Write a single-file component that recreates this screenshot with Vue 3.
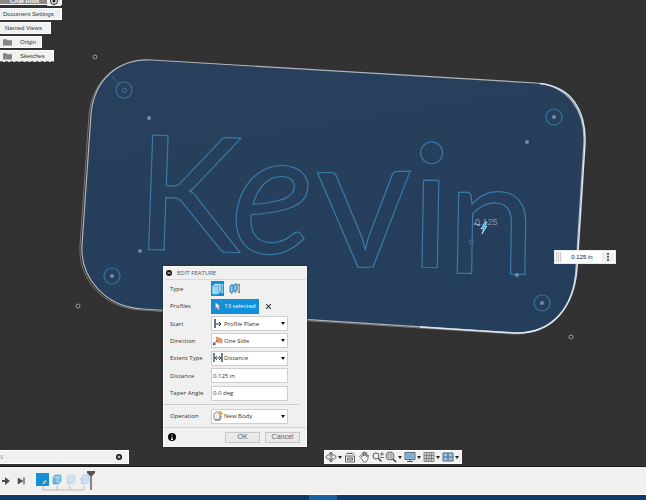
<template>
  <div class="app">
    <main class="viewport">
      <svg class="canvas" viewBox="0 0 646 466" preserveAspectRatio="xMinYMin slice" role="img" aria-label="Name plate sketch">
        <defs>
          <linearGradient id="plate" x1="0" y1="0" x2="0.3" y2="1">
            <stop offset="0" stop-color="#28405c" />
            <stop offset="1" stop-color="#253e5b" />
          </linearGradient>
        </defs>

        <path class="plate-side" :d="plate" transform="translate(-2 1)" />
        <path class="plate" :d="plate" />
        <path class="plate-edge" d="M540 83.500C572 87 586 111 585 143L577 268C574 308 552 334 515 333L420 327" />

        <text class="engraving"><tspan class="cap" x="134" y="249" rotate="2">K</tspan><tspan class="slant" x="230" y="252" rotate="2">e</tspan><tspan class="wide" x="317" y="268" rotate="-1">v</tspan><tspan x="409" y="267" rotate="1">i</tspan><tspan class="cap" x="446" y="273" rotate="1">n</tspan></text>

        <g class="hole">
          <circle v-for="h in holes" :key="h.x" :cx="h.x" :cy="h.y" r="8" />
        </g>
        <g class="point">
          <circle v-for="p in points" :key="p.x" :cx="p.x" :cy="p.y" r="2" />
        </g>
        <g class="corner">
          <circle v-for="c in corners" :key="c.x" :cx="c.x" :cy="c.y" r="2" />
        </g>
        <circle class="ring" cx="124.500" cy="90.500" r="2.200" />
        <circle class="ring" cx="471" cy="242" r="2" />
        <path class="guide" d="M112 76l8 9M438 223h1M454 223h1M465 224h1M492 226h1M506 227h1" />

        <text class="dim" x="475" y="225">0.125</text>
        <path d="M474 224h2M477 225h3" stroke="#f2dfe4" />
        <path d="M485 222l-4 7 3-1-2 6 5-8-3 1 3-5z" fill="#1fa4e8" stroke="#d7f1ff" stroke-width=".7" />
      </svg>

      <nav class="tree" aria-label="Browser">
        <button type="button" class="node root">
          <span>CAM Root</span>
          <svg viewBox="0 0 10 10"><circle cx="5" cy="5" r="3.500" fill="none" stroke="#222" /><circle cx="5" cy="5" r="1.500" fill="#222" /></svg>
        </button>
        <button type="button" class="node settings">Document Settings</button>
        <button type="button" class="node views">Named Views</button>
        <button type="button" class="node folder origin">
          <svg viewBox="0 0 10 8"><path d="M0 1h4l1 1h5v6H0z" fill="#858585" /></svg>Origin
        </button>
        <button type="button" class="node folder sketches">
          <svg viewBox="0 0 10 8"><path d="M0 1h4l1 1h5v6H0z" fill="#858585" /></svg>Sketches
        </button>
      </nav>

      <form class="dialog" @submit.prevent>
        <header class="dialog-head">
          <svg viewBox="0 0 6 6"><circle cx="3" cy="3" r="3" fill="#151515" /><path d="M1.500 3h3" stroke="#fff" /></svg>
          <span>EDIT FEATURE</span>
        </header>

        <div class="fields">
          <div class="row">
            <span class="label">Type</span>
            <div class="types">
              <button type="button" class="type" :class="{ active: type === 'extrude' }" aria-label="Extrude" @click="type = 'extrude'">
                <svg viewBox="0 0 14 14">
                  <path d="M2 4l2-2h6v7l-2 3H2z" fill="#9bd5f4" stroke="#e8f7ff" stroke-width=".7" />
                  <path d="M2 4h6v8M8 4l2-2" fill="none" stroke="#4d9cce" stroke-width=".7" />
                  <path d="M12 2v9M11 3l1-1 1 1M11 10l1 1 1-1" fill="none" stroke="#fff" stroke-width=".8" />
                </svg>
              </button>
              <button type="button" class="type" :class="{ active: type === 'thin' }" aria-label="Thin extrude" @click="type = 'thin'">
                <svg viewBox="0 0 14 14">
                  <path d="M2 4l2-2 2 1 2-2 2 1v6l-2 3-2-2-2 3-2-2z" fill="#579fce" stroke="#28709c" stroke-width=".6" />
                  <path d="M4 4v6M8 3v5" stroke="#b6dff4" />
                  <path d="M12 2v9M11 3l1-1 1 1M11 10l1 1 1-1" fill="none" stroke="#333" stroke-width=".8" />
                </svg>
              </button>
            </div>
          </div>

          <div class="row">
            <span class="label">Profiles</span>
            <button type="button" class="selection">
              <svg viewBox="0 0 8 10"><path d="M1 0v8l2-2 1 3 2-1-1-3h2z" fill="#f5e9e4" stroke="#6d6263" stroke-width=".6" /></svg>
              13 selected
            </button>
            <button type="button" class="clear" aria-label="Clear selection">
              <svg viewBox="0 0 6 6"><path d="M1 1l4 4M5 1L1 5" stroke="#333" stroke-width=".9" /></svg>
            </button>
          </div>

          <div v-for="s in selects" :key="s.id" class="row">
            <label class="label" :for="s.id">{{ s.label }}</label>
            <div class="box">
              <svg v-if="s.id === 'start'" viewBox="0 0 10 10"><path d="M2 0v9" stroke="#142846" stroke-width="1.300" /><path d="M3 5h5M6 3l2 2-2 2" fill="none" stroke="#27364c" /></svg>
              <svg v-else-if="s.id === 'direction'" viewBox="0 0 10 10"><path d="M3 1l6 2v4L4 6z" fill="#ef9a61" stroke="#bd7142" stroke-width=".5" /><path d="M0 9l5-5M0 9l1-3M0 9l3-1" stroke="#444" stroke-width=".8" /></svg>
              <svg v-else viewBox="0 0 10 10"><path d="M1 0v9M9 0v9" stroke="#142846" stroke-width="1.200" /><path d="M2 5h6M4 3L2 5l2 2M6 3l2 2-2 2" fill="none" stroke="#27364c" stroke-width=".8" /></svg>
              <select :id="s.id" v-model="s.value"><option>{{ s.value }}</option></select>
              <svg class="arrow" viewBox="0 0 4 3"><path d="M0 0h4L2 3z" fill="#111" /></svg>
            </div>
          </div>

          <div class="row">
            <label class="label" for="distance">Distance</label>
            <input id="distance" v-model="distance" class="box text" />
          </div>
          <div class="row">
            <label class="label" for="taper">Taper Angle</label>
            <input id="taper" v-model="taper" class="box text" />
          </div>
        </div>

        <div class="row operation">
          <label class="label" for="operation">Operation</label>
          <div class="box">
            <svg viewBox="0 0 10 10"><path d="M1 3l2-2h4v7l-2 1H2L1 8z" fill="#eee" stroke="#77777c" stroke-width=".8" /><path d="M2 9h5l1-2V5" fill="none" stroke="#777" /><path d="M7.500 0v5M5 2.500h5M6 1l3 3M9 1L6 4" stroke="#f5a91c" /></svg>
            <select id="operation" v-model="operation"><option>New Body</option></select>
            <svg class="arrow" viewBox="0 0 4 3"><path d="M0 0h4L2 3z" fill="#111" /></svg>
          </div>
        </div>

        <footer class="dialog-foot">
          <button type="button" class="info" aria-label="Info">
            <svg viewBox="0 0 8 8"><circle cx="4" cy="4" r="4" fill="#080808" /><path d="M4 1.500v1M4 3.500v3M3 6.500h2" stroke="#fff" /></svg>
          </button>
          <button type="submit" class="action">OK</button>
          <button type="button" class="action cancel">Cancel</button>
        </footer>
      </form>

      <div class="value">
        <span class="grip"></span>
        <input v-model="distance" aria-label="Extrude distance" />
        <button type="button" aria-label="More">
          <svg viewBox="0 0 10 9"><path d="M4 0h2v2H4zM4 3h2v2H4zM4 6h2v2H4z" fill="#666" /></svg>
        </button>
      </div>

      <div class="comments">
        <span>S</span>
        <button type="button" aria-label="Add comment">
          <svg viewBox="0 0 6 6"><circle cx="3" cy="3" r="3" fill="#111" /><path d="M3 1.500v3M1.500 3h3" stroke="#fff" stroke-width=".9" /></svg>
        </button>
      </div>

      <div class="navbar" role="toolbar" aria-label="Navigation">
        <button type="button" class="drop" aria-label="Orbit">
          <svg viewBox="0 0 12 12"><path d="M6 1v10M4 3l2-2 2 2M4 9l2 2 2-2" fill="none" stroke="#444" stroke-width=".8" /><ellipse cx="6" cy="6" rx="5" ry="2.200" fill="none" stroke="#555" stroke-width=".9" /><circle cx="6" cy="6" r="1.700" fill="#83bce2" /></svg>
          <svg class="arrow" viewBox="0 0 4 3"><path d="M0 0h4L2 3z" fill="#222" /></svg>
        </button>
        <button type="button" aria-label="Look at">
          <svg viewBox="0 0 12 12"><path d="M1.500 5h9v6h-9zM3.500 7h5v2h-5z" fill="#eee" stroke="#555" stroke-width=".9" /><path d="M2 3.500l2-2M10 3.500l-2-2M4 2.500h4" fill="none" stroke="#555" /></svg>
        </button>
        <button type="button" aria-label="Pan">
          <svg viewBox="0 0 12 12"><path d="M4 8L1.500 5.500l1-1L4 6V2.500l1-.5.500 3V1h1.200l.3 4 .7-3.500 1 .3V6l.8-2 1 .5-1 4.500-1.500 2H5.500z" fill="#f8f8f8" stroke="#4b4b4b" stroke-width=".7" /></svg>
        </button>
        <button type="button" aria-label="Zoom">
          <svg viewBox="0 0 12 12"><circle cx="4" cy="5" r="3" fill="#edf1f4" stroke="#555" /><path d="M6.500 7.500l3 3" stroke="#444" stroke-width="1.500" /><path d="M10 1v4M8 3h4M8 6.500h4" stroke="#444" stroke-width=".7" /></svg>
        </button>
        <button type="button" class="drop" aria-label="Fit">
          <svg viewBox="0 0 12 12"><circle cx="5" cy="5" r="4" fill="#edf1f4" stroke="#666" /><path d="M3 3h4v4H3z" fill="#bcc8d2" stroke="#777" stroke-width=".6" /><path d="M8 8l3 3" stroke="#444" stroke-width="1.700" /></svg>
          <svg class="arrow" viewBox="0 0 4 3"><path d="M0 0h4L2 3z" fill="#222" /></svg>
        </button>
        <button type="button" class="drop" aria-label="Display settings">
          <svg viewBox="0 0 12 12"><path d="M1 1.500h10v7H1z" fill="#8cb9de" stroke="#666" /><path d="M3 3h6v4H3z" fill="#76acd8" /><path d="M3 10.500h6M6 9v2" stroke="#555" /></svg>
          <svg class="arrow" viewBox="0 0 4 3"><path d="M0 0h4L2 3z" fill="#222" /></svg>
        </button>
        <button type="button" class="drop" aria-label="Grid and snaps">
          <svg viewBox="0 0 12 12"><path d="M1 1.500h10v9H1zM1 4.500h10M1 7.500h10M3.500 1.500v9M6 1.500v9M8.500 1.500v9" fill="#ccc" stroke="#777" stroke-width=".8" /></svg>
          <svg class="arrow" viewBox="0 0 4 3"><path d="M0 0h4L2 3z" fill="#222" /></svg>
        </button>
        <button type="button" class="drop" aria-label="Viewports">
          <svg viewBox="0 0 12 12"><path d="M1 2h10v8H1zM1 6h10M6 2v8" fill="#9ac4e5" stroke="#4d6786" /></svg>
          <svg class="arrow" viewBox="0 0 4 3"><path d="M0 0h4L2 3z" fill="#222" /></svg>
        </button>
      </div>
    </main>

    <section class="timeline" aria-label="Timeline">
      <button type="button" aria-label="Play"><svg viewBox="0 0 10 10"><path d="M1 4h3V1l5 4-5 4V6H1z" fill="#505050" /></svg></button>
      <button type="button" aria-label="Go to end"><svg viewBox="0 0 10 10"><path d="M2 2l5 3-5 3z" fill="#505050" stroke="#505050" stroke-width=".6" /><path d="M8 1.500v7" stroke="#505050" stroke-width="1.200" /></svg></button>
      <div class="track">
        <svg class="history" viewBox="0 0 56 20">
          <path d="M8 14v4h41v-4M22 14v4M35 14v4" fill="none" stroke="#b9b9b9" />
          <path d="M1 1h13v13H1z" fill="#1390d8" />
          <path d="M4 11h4" stroke="#2376a2" />
          <path d="M7 12l3-4 2 1-3 3z" fill="#f4b76c" />
          <g v-for="(f, i) in features" :key="i" :transform="`translate(${f.x} 0)`" :opacity="f.opacity">
            <path d="M0 5l2-2h6v6l-2 3H0z" fill="#65b5df" stroke="#499bca" stroke-width=".6" />
            <path d="M0 5h6v7M6 5l2-2M4 4v7" fill="none" stroke="#d1edf9" stroke-width=".7" />
          </g>
        </svg>
        <svg class="marker" viewBox="0 0 8 20"><path d="M0 0h8v2L5 5H3L0 2z" fill="#555" /><path d="M4 4v15" stroke="#555" stroke-width="1.400" /></svg>
      </div>
    </section>
    <div class="taskbar"><span></span></div>
  </div>
</template>

<script setup>
import { ref } from 'vue'

const type = ref('extrude')
const distance = ref('0.125 in')
const taper = ref('0.0 deg')
const operation = ref('New Body')

const selects = ref([
  { id: 'start', label: 'Start', value: 'Profile Plane' },
  { id: 'direction', label: 'Direction', value: 'One Side' },
  { id: 'extent', label: 'Extent Type', value: 'Distance' }
])

const plate = 'M91 114C94 80 118 58 152 60L536 83C568 86 585 110 584 142L576 268C574 308 552 334 515 333L143 309C105 307 80 278 82 245Z'

const holes = [{ x: 124, y: 90 }, { x: 554, y: 117 }, { x: 542, y: 303 }, { x: 112, y: 276 }]
const points = [
  { x: 149, y: 118 }, { x: 140, y: 251 }, { x: 527, y: 142 }, { x: 517, y: 275 },
  { x: 554, y: 117 }, { x: 542, y: 303 }, { x: 112, y: 276 }
]
const corners = [{ x: 95, y: 57 }, { x: 78, y: 306 }, { x: 571, y: 337 }]

const features = [
  { x: 18, opacity: 1 },
  { x: 32, opacity: 0.3 },
  { x: 46, opacity: 0.35 }
]
</script>

<style>
body { margin: 0; background: #323232; }
</style>

<style scoped>
.app {
  height: 100vh;
  display: flex;
  flex-direction: column;
  color: #333;
  font: 6px/8px 'Open Sans', sans-serif;
  overflow: hidden;
}
.app * { box-sizing: border-box; }
button, input, select { font: inherit; color: inherit; margin: 0; padding: 0; border: 0; background: none; border-radius: 0; outline: none; }
select { appearance: none; }
svg { display: block; flex-shrink: 0; }

.viewport { position: relative; flex: 1; min-height: 0; overflow: hidden; background: #323232; }
.canvas { width: 100%; height: 100%; }
.plate { fill: url(#plate); stroke: #aeb4ba; stroke-width: 1.2; }
.plate-side { fill: #323232; stroke: #77716d; stroke-width: 1; }
.plate-edge { fill: none; stroke: #d9e6f2; stroke-width: 1.5; }
.engraving { font: 400 172px Lato, sans-serif; fill: none; stroke: #3b79a8; stroke-width: 1.2; stroke-linejoin: round; }
.engraving .cap { font-size: 160px; }
.engraving .slant { font-style: italic; }
.engraving .wide { font-size: 188px; }
.hole { fill: none; stroke: #37739f; stroke-width: 1.2; }
.point { fill: #6e8caa; }
.corner { fill: #292929; stroke: #a0a0a0; stroke-width: 1; }
.ring { fill: none; stroke: #526d8c; stroke-width: 1; }
.guide { stroke: #4e6279; stroke-width: 1; }
.dim { font: 9px 'Liberation Sans', sans-serif; fill: #8095ab; }

.tree {
  position: absolute; top: -7px; left: 0;
  display: flex; flex-direction: column; align-items: flex-start; gap: 2px;
  font: 6px/8px 'Liberation Sans', sans-serif;
}
.node { display: flex; align-items: center; height: 12px; background: #f1f1f1; border: 1px solid #fff; border-left: 0; }
.root { width: 62px; background: #8b8b8b; color: #fff; font-weight: 700; padding: 3px 0 0 10px; justify-content: space-between; }
.root svg { width: 14px; height: 10px; background: #f1f1f1; }
.settings { width: 62px; margin-top: 1px; padding-left: 3px; }
.views { width: 51px; padding-left: 5px; }
.folder { gap: 8px; padding-left: 3px; }
.folder svg { width: 9px; height: 8px; }
.origin { width: 42px; }
.sketches { width: 54px; border-bottom: 1px dashed #50749b; }

.dialog {
  position: absolute; top: 266px; left: 163px; width: 144px;
  background: #f0f0f0; border: 1px solid #fafafa;
  box-shadow: 0 0 2px #151b22;
}
.dialog-head { display: flex; align-items: center; gap: 5px; height: 13px; padding-left: 2px; border-bottom: 1px solid #d8d8d8; color: #555; }
.dialog-head svg { width: 6px; height: 6px; }
.fields { display: grid; grid-auto-rows: 1fr; height: 122px; }
.row { display: flex; align-items: center; padding-left: 6px; }
.label { width: 41px; flex-shrink: 0; white-space: nowrap; }
.types { display: flex; gap: 4px; }
.type { width: 13px; height: 15px; }
.type.active { background: #118fd8; }
.type svg { width: 13px; height: 14px; }
.selection { display: flex; align-items: center; justify-content: center; gap: 2px; width: 48px; height: 15px; color: #fff; background: #118fd8; white-space: nowrap; }
.selection svg { width: 8px; height: 9px; }
.clear { margin-left: 6px; }
.clear svg { width: 7px; height: 7px; }
.box { display: flex; align-items: center; width: 77px; height: 15px; border: 1px solid #cecece; background: #fff; padding: 0 2px 0 1px; }
.box svg { width: 10px; height: 10px; }
.box select { flex: 1; min-width: 0; height: 13px; padding-left: 1px; }
.box .arrow, .drop .arrow { width: 4px; height: 3px; }
.box.text { padding-left: 1px; }
.operation { height: 23px; border-top: 1px solid #cfcfcf; margin: 2px 7px 0 0; }
.dialog-foot { display: flex; align-items: center; gap: 5px; height: 19px; padding: 0 6px 0 4px; border-top: 1px solid #d4d4d4; font: 7px/8px 'Liberation Sans', sans-serif; }
.info { margin-right: auto; }
.info svg { width: 8px; height: 8px; }
.action { width: 35px; height: 11px; border: 1px solid #c7c7c7; background: #e9e9e9; color: #666; }

.value {
  position: absolute; top: 250px; left: 554px;
  display: flex; align-items: stretch; width: 62px; height: 14px; padding: 1px;
  background: #fff; border: 1px solid #e9e9e9;
  font: 6px/8px 'Liberation Sans', sans-serif; color: #111;
}
.grip { width: 6px; background: repeating-linear-gradient(90deg, #ccc 0 1px, #f6f6f6 1px 2px); }
.value input { flex: 1; min-width: 0; text-align: center; }
.value button { width: 12px; padding-left: 1px; background: #eee; }
.value svg { width: 10px; height: 9px; }

.comments {
  position: absolute; bottom: 2px; left: 0;
  display: flex; align-items: center; justify-content: space-between;
  width: 129px; height: 14px; padding-right: 6px;
  background: #f0f0f0; border: 1px solid #fff; border-left: 0;
  color: #7995b4;
}
.comments svg { width: 6px; height: 6px; }

.navbar {
  position: absolute; bottom: 2px; left: 324px;
  display: flex; align-items: center; justify-content: space-between;
  width: 138px; height: 14px; padding: 0 2px 0 0;
  background: #f1f1f1; border: 1px solid #fff;
}
.navbar button { display: flex; align-items: center; gap: 1px; }
.navbar svg { width: 12px; height: 12px; }
.navbar .arrow { width: 4px; height: 3px; }

.timeline {
  display: flex; align-items: center; height: 29px; flex-shrink: 0;
  background: #f0f0f0; border-top: 1px solid #171717; border-bottom: 1px solid #fff;
}
.timeline button { width: 15px; padding-left: 1px; }
.timeline button svg { width: 10px; height: 10px; }
.track { display: flex; align-items: center; margin-left: 5px; }
.history { width: 56px; height: 20px; margin-top: 2px; margin-right: -4px; }
.marker { width: 8px; height: 20px; }
.taskbar { height: 5px; flex-shrink: 0; background: #0c386a; }
.taskbar span { display: block; width: 28px; height: 5px; margin: 0 auto; background: #1c60a0; }
</style>
